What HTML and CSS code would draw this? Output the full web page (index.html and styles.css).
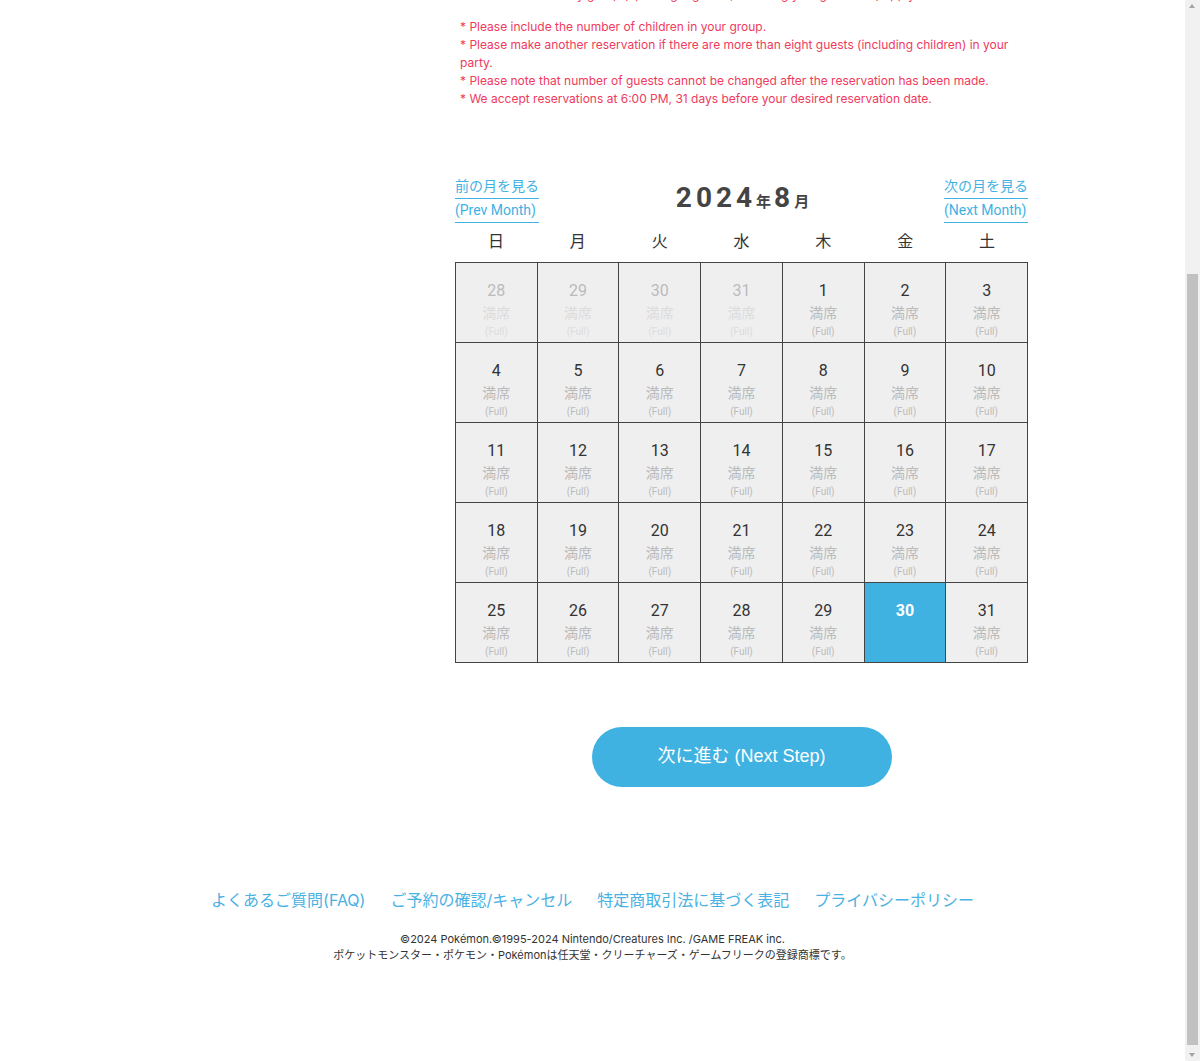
FILE: index.html
```html
<!DOCTYPE html>
<html lang="ja">
<head>
<meta charset="utf-8">
<title>ポケモンカフェ 予約</title>
<link rel="stylesheet" href="styles.css">
</head>
<body>
<div class="page">
  <div class="layout">
    <aside class="side"></aside>
    <main class="main">
      <section class="intro">
        <h1 class="intro-title">ご予約人数・日付の選択</h1>
        <div class="guest-row">
          <span class="guest-label">人数 (Number of Guests)</span>
          <span class="guest-select">2名 (2 Guests)</span>
        </div>
        <ul class="notes">
          <li>※お子様も人数に含めてご予約ください。</li>
          <li>※お子様を含め8名様を超える場合は、別途ご予約をお取りください。</li>
          <li>※ご予約後の人数変更はできません。</li>
          <li>※ご希望日の31日前の18:00より予約受付を開始いたします。</li>
        </ul>
        <p class="notes-lead">* Reservation slots by group (up to eight guests, including young children) apply.</p>
      </section>
      <ul class="notes notes-en">
        <li>* Please include the number of children in your group.</li>
        <li>* Please make another reservation if there are more than eight guests (including children) in your party.</li>
        <li>* Please note that number of guests cannot be changed after the reservation has been made.</li>
        <li>* We accept reservations at 6:00 PM, 31 days before your desired reservation date.</li>
      </ul>

      <section class="calendar">
        <div class="cal-head">
          <a class="month-link" href="#"><span>前の月を見る</span><span>(Prev Month)</span></a>
          <div class="cal-title"><span class="num">2024</span><span class="unit">年</span><span class="num">8</span><span class="unit">月</span></div>
          <a class="month-link" href="#"><span>次の月を見る</span><span>(Next Month)</span></a>
        </div>
        <div class="weekdays">
          <span>日</span><span>月</span><span>火</span><span>水</span><span>木</span><span>金</span><span>土</span>
        </div>
        <div class="grid">
          <div class="cell out"><span class="d">28</span><span class="s">満席</span><span class="f">(Full)</span></div>
          <div class="cell out"><span class="d">29</span><span class="s">満席</span><span class="f">(Full)</span></div>
          <div class="cell out"><span class="d">30</span><span class="s">満席</span><span class="f">(Full)</span></div>
          <div class="cell out"><span class="d">31</span><span class="s">満席</span><span class="f">(Full)</span></div>
          <div class="cell"><span class="d">1</span><span class="s">満席</span><span class="f">(Full)</span></div>
          <div class="cell"><span class="d">2</span><span class="s">満席</span><span class="f">(Full)</span></div>
          <div class="cell"><span class="d">3</span><span class="s">満席</span><span class="f">(Full)</span></div>

          <div class="cell"><span class="d">4</span><span class="s">満席</span><span class="f">(Full)</span></div>
          <div class="cell"><span class="d">5</span><span class="s">満席</span><span class="f">(Full)</span></div>
          <div class="cell"><span class="d">6</span><span class="s">満席</span><span class="f">(Full)</span></div>
          <div class="cell"><span class="d">7</span><span class="s">満席</span><span class="f">(Full)</span></div>
          <div class="cell"><span class="d">8</span><span class="s">満席</span><span class="f">(Full)</span></div>
          <div class="cell"><span class="d">9</span><span class="s">満席</span><span class="f">(Full)</span></div>
          <div class="cell"><span class="d">10</span><span class="s">満席</span><span class="f">(Full)</span></div>

          <div class="cell"><span class="d">11</span><span class="s">満席</span><span class="f">(Full)</span></div>
          <div class="cell"><span class="d">12</span><span class="s">満席</span><span class="f">(Full)</span></div>
          <div class="cell"><span class="d">13</span><span class="s">満席</span><span class="f">(Full)</span></div>
          <div class="cell"><span class="d">14</span><span class="s">満席</span><span class="f">(Full)</span></div>
          <div class="cell"><span class="d">15</span><span class="s">満席</span><span class="f">(Full)</span></div>
          <div class="cell"><span class="d">16</span><span class="s">満席</span><span class="f">(Full)</span></div>
          <div class="cell"><span class="d">17</span><span class="s">満席</span><span class="f">(Full)</span></div>

          <div class="cell"><span class="d">18</span><span class="s">満席</span><span class="f">(Full)</span></div>
          <div class="cell"><span class="d">19</span><span class="s">満席</span><span class="f">(Full)</span></div>
          <div class="cell"><span class="d">20</span><span class="s">満席</span><span class="f">(Full)</span></div>
          <div class="cell"><span class="d">21</span><span class="s">満席</span><span class="f">(Full)</span></div>
          <div class="cell"><span class="d">22</span><span class="s">満席</span><span class="f">(Full)</span></div>
          <div class="cell"><span class="d">23</span><span class="s">満席</span><span class="f">(Full)</span></div>
          <div class="cell"><span class="d">24</span><span class="s">満席</span><span class="f">(Full)</span></div>

          <div class="cell"><span class="d">25</span><span class="s">満席</span><span class="f">(Full)</span></div>
          <div class="cell"><span class="d">26</span><span class="s">満席</span><span class="f">(Full)</span></div>
          <div class="cell"><span class="d">27</span><span class="s">満席</span><span class="f">(Full)</span></div>
          <div class="cell"><span class="d">28</span><span class="s">満席</span><span class="f">(Full)</span></div>
          <div class="cell"><span class="d">29</span><span class="s">満席</span><span class="f">(Full)</span></div>
          <div class="cell selected"><span class="d">30</span></div>
          <div class="cell"><span class="d">31</span><span class="s">満席</span><span class="f">(Full)</span></div>
        </div>
      </section>

      <div class="next-wrap">
        <button class="next-btn" type="button">次に進む (Next Step)</button>
      </div>
    </main>
  </div>

  <footer class="footer">
    <nav class="footer-links">
      <a href="#">よくあるご質問(FAQ)</a>
      <a href="#">ご予約の確認/キャンセル</a>
      <a href="#">特定商取引法に基づく表記</a>
      <a href="#">プライバシーポリシー</a>
    </nav>
    <p class="copy">©2024 Pokémon.©1995-2024 Nintendo/Creatures Inc. /GAME FREAK inc.<br>ポケットモンスター・ポケモン・Pokémonは任天堂・クリーチャーズ・ゲームフリークの登録商標です。</p>
  </footer>
</div>
<div class="scrollbar" aria-hidden="true">
  <span class="sb-arrow sb-up"></span>
  <span class="sb-thumb"></span>
  <span class="sb-arrow sb-down"></span>
</div>
<script src="script.js"></script>
</body>
</html>
```

FILE: styles.css
```css
html, body {
  margin: 0;
  padding: 0;
}
body {
  font-family: Inter, "Noto Sans CJK JP", sans-serif;
  color: #333;
  background: #fff;
}
a {
  text-decoration: none;
}

.layout {
  display: grid;
  grid-template-columns: 455px 573px;
}

/* intro (scrolled out of view) */
.intro {
  padding-top: 40px;
}
.intro-title {
  margin: 0 0 40px;
  font-size: 22px;
  font-weight: 700;
  text-align: center;
  color: #333;
}
.guest-row {
  display: flex;
  align-items: center;
  gap: 20px;
  margin-bottom: 30px;
  font-size: 15px;
}
.guest-select {
  border: 1px solid #999;
  border-radius: 4px;
  padding: 8px 40px 8px 12px;
}
.notes {
  list-style: none;
  margin: 0;
  padding: 0 5px;
  color: #ef3a5d;
  font-size: 12px;
  line-height: 18px;
}
.notes-lead {
  margin: 14px 0 0;
  padding: 0 5px;
  color: #ef3a5d;
  font-size: 12px;
  line-height: 18px;
}
.notes-en {
  margin-top: 14px;
}

/* calendar */
.calendar {
  margin-top: 68px;
  font-family: Roboto, "Noto Sans CJK JP", sans-serif;
}
.cal-head {
  display: flex;
  justify-content: space-between;
  align-items: center;
}
.month-link {
  display: flex;
  flex-direction: column;
  color: #3fb1e3;
  font-size: 14px;
}
.month-link span {
  display: block;
  line-height: 20px;
  padding-bottom: 2px;
  border-bottom: 1px solid #3fb1e3;
}
.month-link span + span {
  margin-top: 1px;
}
.cal-title {
  display: flex;
  align-items: baseline;
  color: #444;
  font-weight: 700;
  padding-left: 2px;
  margin-bottom: 4px;
}
.cal-title .num {
  font-size: 28px;
  letter-spacing: 4px;
}
.cal-title .unit {
  font-size: 15px;
  margin-right: 3px;
}
.cal-title .unit:last-child {
  margin-right: 0;
}
.weekdays {
  display: grid;
  grid-template-columns: repeat(7, 1fr);
  height: 39px;
  box-sizing: border-box;
  padding-bottom: 6px;
  align-items: center;
  text-align: center;
  font-size: 16px;
  color: #333;
}
.grid {
  display: grid;
  grid-template-columns: repeat(7, 1fr);
  grid-auto-rows: 79px;
  gap: 1px;
  padding: 1px;
  background: #444;
}
.cell {
  background: #efefef;
  display: flex;
  flex-direction: column;
  align-items: center;
  padding-top: 18px;
  box-sizing: border-box;
}
.cell .d {
  font-size: 16px;
  line-height: 20px;
  color: #333;
}
.cell .s {
  font-size: 14px;
  line-height: 22px;
  margin-top: 1px;
  color: #bbb;
}
.cell .f {
  font-size: 10px;
  line-height: 14px;
  margin-top: 1px;
  color: #bbb;
}
.cell.out .d {
  color: #bbb;
}
.cell.out .s,
.cell.out .f {
  color: #dcdcdc;
}
.cell.selected {
  background: #3fb2e2;
}
.cell.selected .d {
  color: #fff;
  font-weight: 700;
}

.next-wrap {
  display: flex;
  justify-content: center;
  margin-top: 64px;
}
.next-btn {
  width: 300px;
  height: 60px;
  border: none;
  border-radius: 30px;
  background: #3fb2e2;
  color: #fff;
  font-family: "Liberation Sans", "Noto Sans CJK JP", sans-serif;
  font-size: 18px;
  padding: 0 0 6px;
  cursor: pointer;
}

/* footer */
.footer {
  width: 1185px;
  max-width: 100%;
  margin-top: 100px;
  padding-bottom: 98px;
  text-align: center;
}
.footer-links {
  display: flex;
  justify-content: center;
  gap: 25px;
  font-size: 16px;
  line-height: 26px;
}
.footer-links a {
  color: #4ab1e3;
}
.copy {
  margin: 18px 0 0;
  font-size: 11px;
  line-height: 16px;
  color: #333;
}

/* window scrollbar */
.scrollbar {
  position: fixed;
  top: 0;
  right: 0;
  width: 15px;
  height: 100%;
  background: #f1f1f1;
}
.sb-thumb {
  position: absolute;
  left: 2px;
  width: 11px;
  top: 274px;
  bottom: 16px;
  background: #c1c1c1;
}
.sb-arrow {
  position: absolute;
  left: 4px;
  width: 0;
  height: 0;
  border-left: 3.5px solid transparent;
  border-right: 3.5px solid transparent;
}
.sb-up {
  top: 4px;
  border-bottom: 4px solid #a3a3a3;
}
.sb-down {
  bottom: 4px;
  border-top: 4px solid #a3a3a3;
}
```

FILE: script.js
```js
window.scrollTo(0, document.documentElement.scrollHeight);
```
